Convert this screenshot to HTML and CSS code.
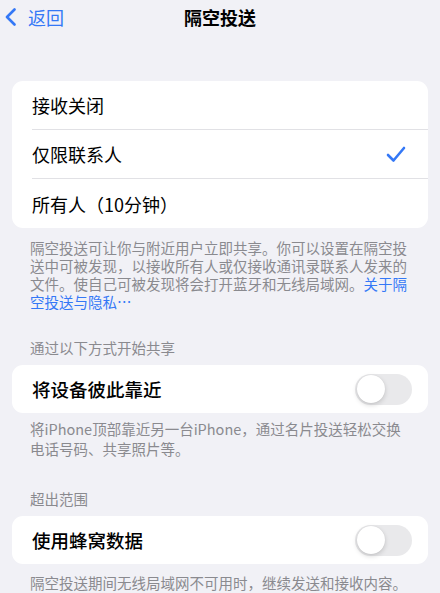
FILE: index.html
```html
<!DOCTYPE html>
<html lang="zh-CN">
  <head>
    <meta charset="UTF-8" />
    <meta name="viewport" content="width=device-width, initial-scale=1.0" />
    <title>隔空投送</title>
    <link rel="stylesheet" href="styles.css">
  </head>
  <body>
    <header class="nav-bar">
      <a class="back-btn" href="#">
        <svg class="chevron" width="13" height="18" viewBox="0 0 13 18">
          <path d="M10.5 1.5 L3 9 L10.5 16.5" fill="none" stroke="currentColor" stroke-width="2.6" stroke-linecap="round" stroke-linejoin="round"/>
        </svg>
        <span>返回</span>
      </a>
      <div class="nav-title">隔空投送</div>
      <div></div>
    </header>

    <main class="settings">
      <section class="group group-first">
        <div class="card">
          <div class="row">接收关闭</div>
          <div class="row">
            <span>仅限联系人</span>
            <svg class="check" width="20" height="17" viewBox="0 0 20 17">
              <path d="M2 9 L7.5 14.5 L18 2" fill="none" stroke="currentColor" stroke-width="2.6" stroke-linecap="round" stroke-linejoin="round"/>
            </svg>
          </div>
          <div class="row">所有人（10分钟）</div>
        </div>
        <p class="footer-note note-first">隔空投送可让你与附近用户立即共享。你可以设置在隔空投送中可被发现，以接收所有人或仅接收通讯录联系人发来的文件。使自己可被发现将会打开蓝牙和无线局域网。<a href="#">关于隔空投送与隐私…</a></p>
      </section>

      <section class="group">
        <h2 class="group-title">通过以下方式开始共享</h2>
        <div class="card">
          <div class="row row-strong">
            <span>将设备彼此靠近</span>
            <span class="toggle"><span class="knob"></span></span>
          </div>
        </div>
        <p class="footer-note note-loose">将iPhone顶部靠近另一台iPhone，通过名片投送轻松交换电话号码、共享照片等。</p>
      </section>

      <section class="group group-last">
        <h2 class="group-title">超出范围</h2>
        <div class="card">
          <div class="row row-strong">
            <span>使用蜂窝数据</span>
            <span class="toggle"><span class="knob"></span></span>
          </div>
        </div>
        <p class="footer-note">隔空投送期间无线局域网不可用时，继续发送和接收内容。</p>
      </section>
    </main>
  </body>
</html>
```

FILE: styles.css
```css
:root {
  --bg-color: #f1f1f6;
  --card-bg: #ffffff;
  --text-color: #000000;
  --muted: #8a8a8f;
  --blue: #3478f6;
  --separator: #e1e1e5;
  --toggle-off: #e9e9eb;
  font-family: "Noto Sans CJK SC", "Noto Sans", sans-serif;
}

body {
  margin: 0;
  height: 593px;
  overflow: hidden;
  background-color: var(--bg-color);
  color: var(--text-color);
}

/* top navigation */
.nav-bar {
  display: grid;
  grid-template-columns: 1fr auto 1fr;
  align-items: center;
  height: 34px;
}

.back-btn {
  display: flex;
  align-items: center;
  gap: 11px;
  padding-left: 4px;
  color: var(--blue);
  text-decoration: none;
  font-size: 18px;
}

.nav-title {
  font-size: 18px;
  font-weight: 700;
}

/* grouped list */
.settings {
  display: flex;
  flex-direction: column;
}

.group {
  margin-top: 28px;
}

.group-first {
  margin-top: 47px;
}

.group-last {
  margin-top: 31px;
}

.group-title {
  margin: 0 0 8px;
  padding: 0 30px;
  font-size: 14.5px;
  line-height: 18px;
  font-weight: 400;
  color: var(--muted);
}

.card {
  margin: 0 12px;
  background-color: var(--card-bg);
  border-radius: 11px;
  overflow: hidden;
}

.row {
  display: flex;
  align-items: center;
  justify-content: space-between;
  box-sizing: border-box;
  height: 49px;
  margin-left: 20px;
  padding-right: 22px;
  font-size: 18px;
  border-bottom: 1px solid var(--separator);
}

.row:last-child {
  border-bottom: none;
}

.row-strong {
  height: 48px;
  font-size: 18.5px;
  font-weight: 500;
  padding-right: 16px;
}

.check {
  color: var(--blue);
}

.toggle {
  display: flex;
  align-items: center;
  width: 57px;
  height: 31px;
  padding: 0 2px;
  box-sizing: border-box;
  border-radius: 16px;
  background-color: var(--toggle-off);
}

.knob {
  width: 28px;
  height: 28px;
  border-radius: 50%;
  background-color: #ffffff;
  box-shadow: 0 2px 5px rgba(0, 0, 0, 0.16), 0 0 1px rgba(0, 0, 0, 0.1);
}

.footer-note {
  margin: 10px 0 0;
  padding: 0 30px;
  font-size: 14.5px;
  line-height: 18px;
  color: var(--muted);
}

.note-first {
  margin-top: 11px;
}

.footer-note a {
  color: var(--blue);
  text-decoration: none;
}

.note-loose {
  line-height: 20px;
  margin-top: 6px;
}
```
